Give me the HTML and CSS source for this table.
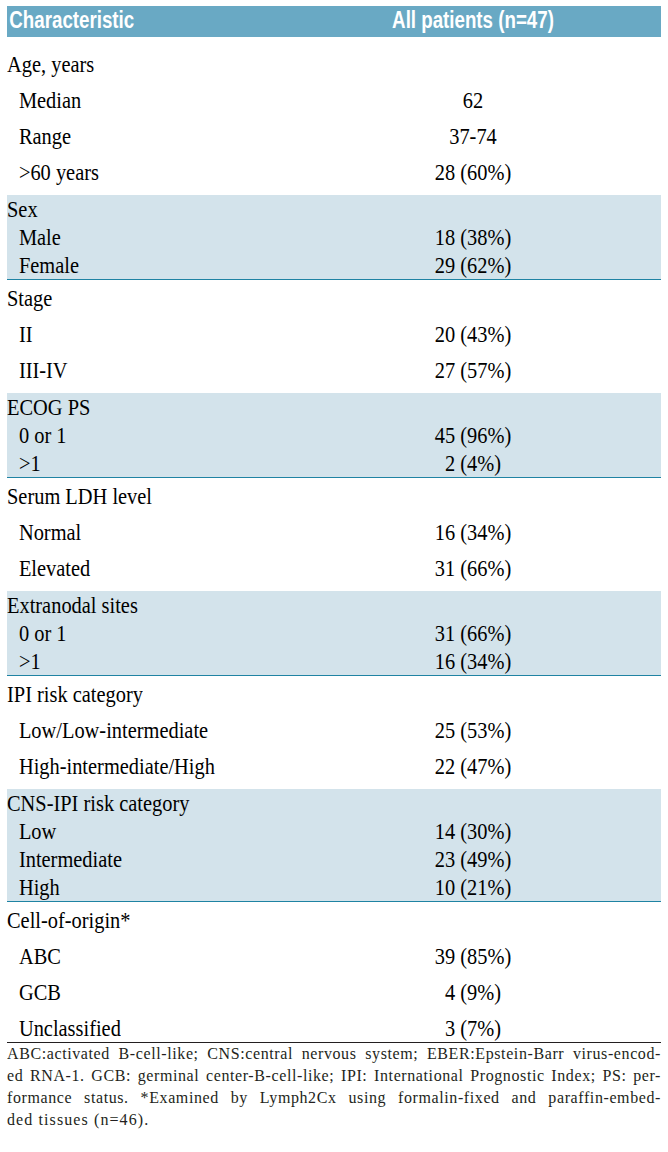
FILE: index.html
```html
<!DOCTYPE html>
<html lang="en">
<head>
<meta charset="utf-8">
<title>Patient characteristics</title>
<link rel="stylesheet" href="styles.css">
</head>
<body>
<div class="tbl">
  <div class="head">
    <div class="c1">Characteristic</div>
    <div class="c2">All patients (n=47)</div>
  </div>

  <div class="sec first">
    <div class="row"><div class="c1">Age, years</div><div class="c2"></div></div>
    <div class="row"><div class="c1 sub">Median</div><div class="c2">62</div></div>
    <div class="row"><div class="c1 sub">Range</div><div class="c2">37-74</div></div>
    <div class="row"><div class="c1 sub">&gt;60 years</div><div class="c2">28 (60%)</div></div>
  </div>

  <div class="sec shade">
    <div class="row"><div class="c1">Sex</div><div class="c2"></div></div>
    <div class="row"><div class="c1 sub">Male</div><div class="c2">18 (38%)</div></div>
    <div class="row"><div class="c1 sub">Female</div><div class="c2">29 (62%)</div></div>
  </div>

  <div class="sec">
    <div class="row"><div class="c1">Stage</div><div class="c2"></div></div>
    <div class="row"><div class="c1 sub">II</div><div class="c2">20 (43%)</div></div>
    <div class="row"><div class="c1 sub">III-IV</div><div class="c2">27 (57%)</div></div>
  </div>

  <div class="sec shade">
    <div class="row"><div class="c1">ECOG PS</div><div class="c2"></div></div>
    <div class="row"><div class="c1 sub">0 or 1</div><div class="c2">45 (96%)</div></div>
    <div class="row"><div class="c1 sub">&gt;1</div><div class="c2">2 (4%)</div></div>
  </div>

  <div class="sec">
    <div class="row"><div class="c1">Serum LDH level</div><div class="c2"></div></div>
    <div class="row"><div class="c1 sub">Normal</div><div class="c2">16 (34%)</div></div>
    <div class="row"><div class="c1 sub">Elevated</div><div class="c2">31 (66%)</div></div>
  </div>

  <div class="sec shade">
    <div class="row"><div class="c1">Extranodal sites</div><div class="c2"></div></div>
    <div class="row"><div class="c1 sub">0 or 1</div><div class="c2">31 (66%)</div></div>
    <div class="row"><div class="c1 sub">&gt;1</div><div class="c2">16 (34%)</div></div>
  </div>

  <div class="sec">
    <div class="row"><div class="c1">IPI risk category</div><div class="c2"></div></div>
    <div class="row"><div class="c1 sub">Low/Low-intermediate</div><div class="c2">25 (53%)</div></div>
    <div class="row"><div class="c1 sub">High-intermediate/High</div><div class="c2">22 (47%)</div></div>
  </div>

  <div class="sec shade">
    <div class="row"><div class="c1">CNS-IPI risk category</div><div class="c2"></div></div>
    <div class="row"><div class="c1 sub">Low</div><div class="c2">14 (30%)</div></div>
    <div class="row"><div class="c1 sub">Intermediate</div><div class="c2">23 (49%)</div></div>
    <div class="row"><div class="c1 sub">High</div><div class="c2">10 (21%)</div></div>
  </div>

  <div class="sec last">
    <div class="row"><div class="c1">Cell-of-origin*</div><div class="c2"></div></div>
    <div class="row"><div class="c1 sub">ABC</div><div class="c2">39 (85%)</div></div>
    <div class="row"><div class="c1 sub">GCB</div><div class="c2">4 (9%)</div></div>
    <div class="row"><div class="c1 sub">Unclassified</div><div class="c2">3 (7%)</div></div>
  </div>

  <div class="note">
    <div class="ln">ABC:activated B-cell-like; CNS:central nervous system; EBER:Epstein-Barr virus-encod-</div>
    <div class="ln">ed RNA-1. GCB: germinal center-B-cell-like; IPI: International Prognostic Index; PS: per-</div>
    <div class="ln">formance status. *Examined by Lymph2Cx using formalin-fixed and paraffin-embed-</div>
    <div class="ln end">ded tissues (n=46).</div>
  </div>
</div>
</body>
</html>
```

FILE: styles.css
```css
html, body {
  background: #ffffff;
}

body {
  margin: 6px 7px 0 7px;
  font-family: "Liberation Serif", "Times New Roman", serif;
  color: #000000;
}

.tbl {
  width: 654px;
}

/* header bar */
.head {
  display: grid;
  grid-template-columns: 1fr 376px;
  height: 31px;
  background: #69a9c4;
  color: #ffffff;
  font-family: "Liberation Sans", Arial, sans-serif;
  font-weight: 700;
  font-size: 24px;
  line-height: 27px;
  white-space: nowrap;
}

.head .c1 {
  padding-left: 3px;
  transform: scaleX(0.78);
  transform-origin: left center;
}

.head .c2 {
  text-align: center;
  transform: scaleX(0.78);
  transform-origin: center center;
}

/* body sections */
.sec {
  padding-bottom: 5px;
}

.sec.first {
  padding-top: 9px;
}

.sec.shade {
  background: #d3e3eb;
  padding-bottom: 0;
  border-bottom: 1px solid #1f83a3;
}

.sec.last {
  padding-bottom: 0;
  border-bottom: 1px solid #231f20;
}

.row {
  display: grid;
  grid-template-columns: 1fr 376px;
  height: 36px;
  font-size: 24px;
  line-height: 36px;
  white-space: nowrap;
}

.shade .row {
  height: 28px;
  line-height: 28px;
}

.last .row:last-child {
  height: 32px;
}

.row .c1 {
  transform: scaleX(0.85);
  transform-origin: left center;
}

.row .c1.sub {
  padding-left: 14px;
}

.row .c2 {
  text-align: center;
  transform: scaleX(0.85);
  transform-origin: center center;
}

/* footnote */
.note {
  font-size: 16px;
  line-height: 22px;
  letter-spacing: 0.6px;
  color: #231f20;
}

.note .ln {
  text-align: justify;
  text-align-last: justify;
}

.note .ln.end {
  text-align-last: left;
  letter-spacing: 1.1px;
}
```
